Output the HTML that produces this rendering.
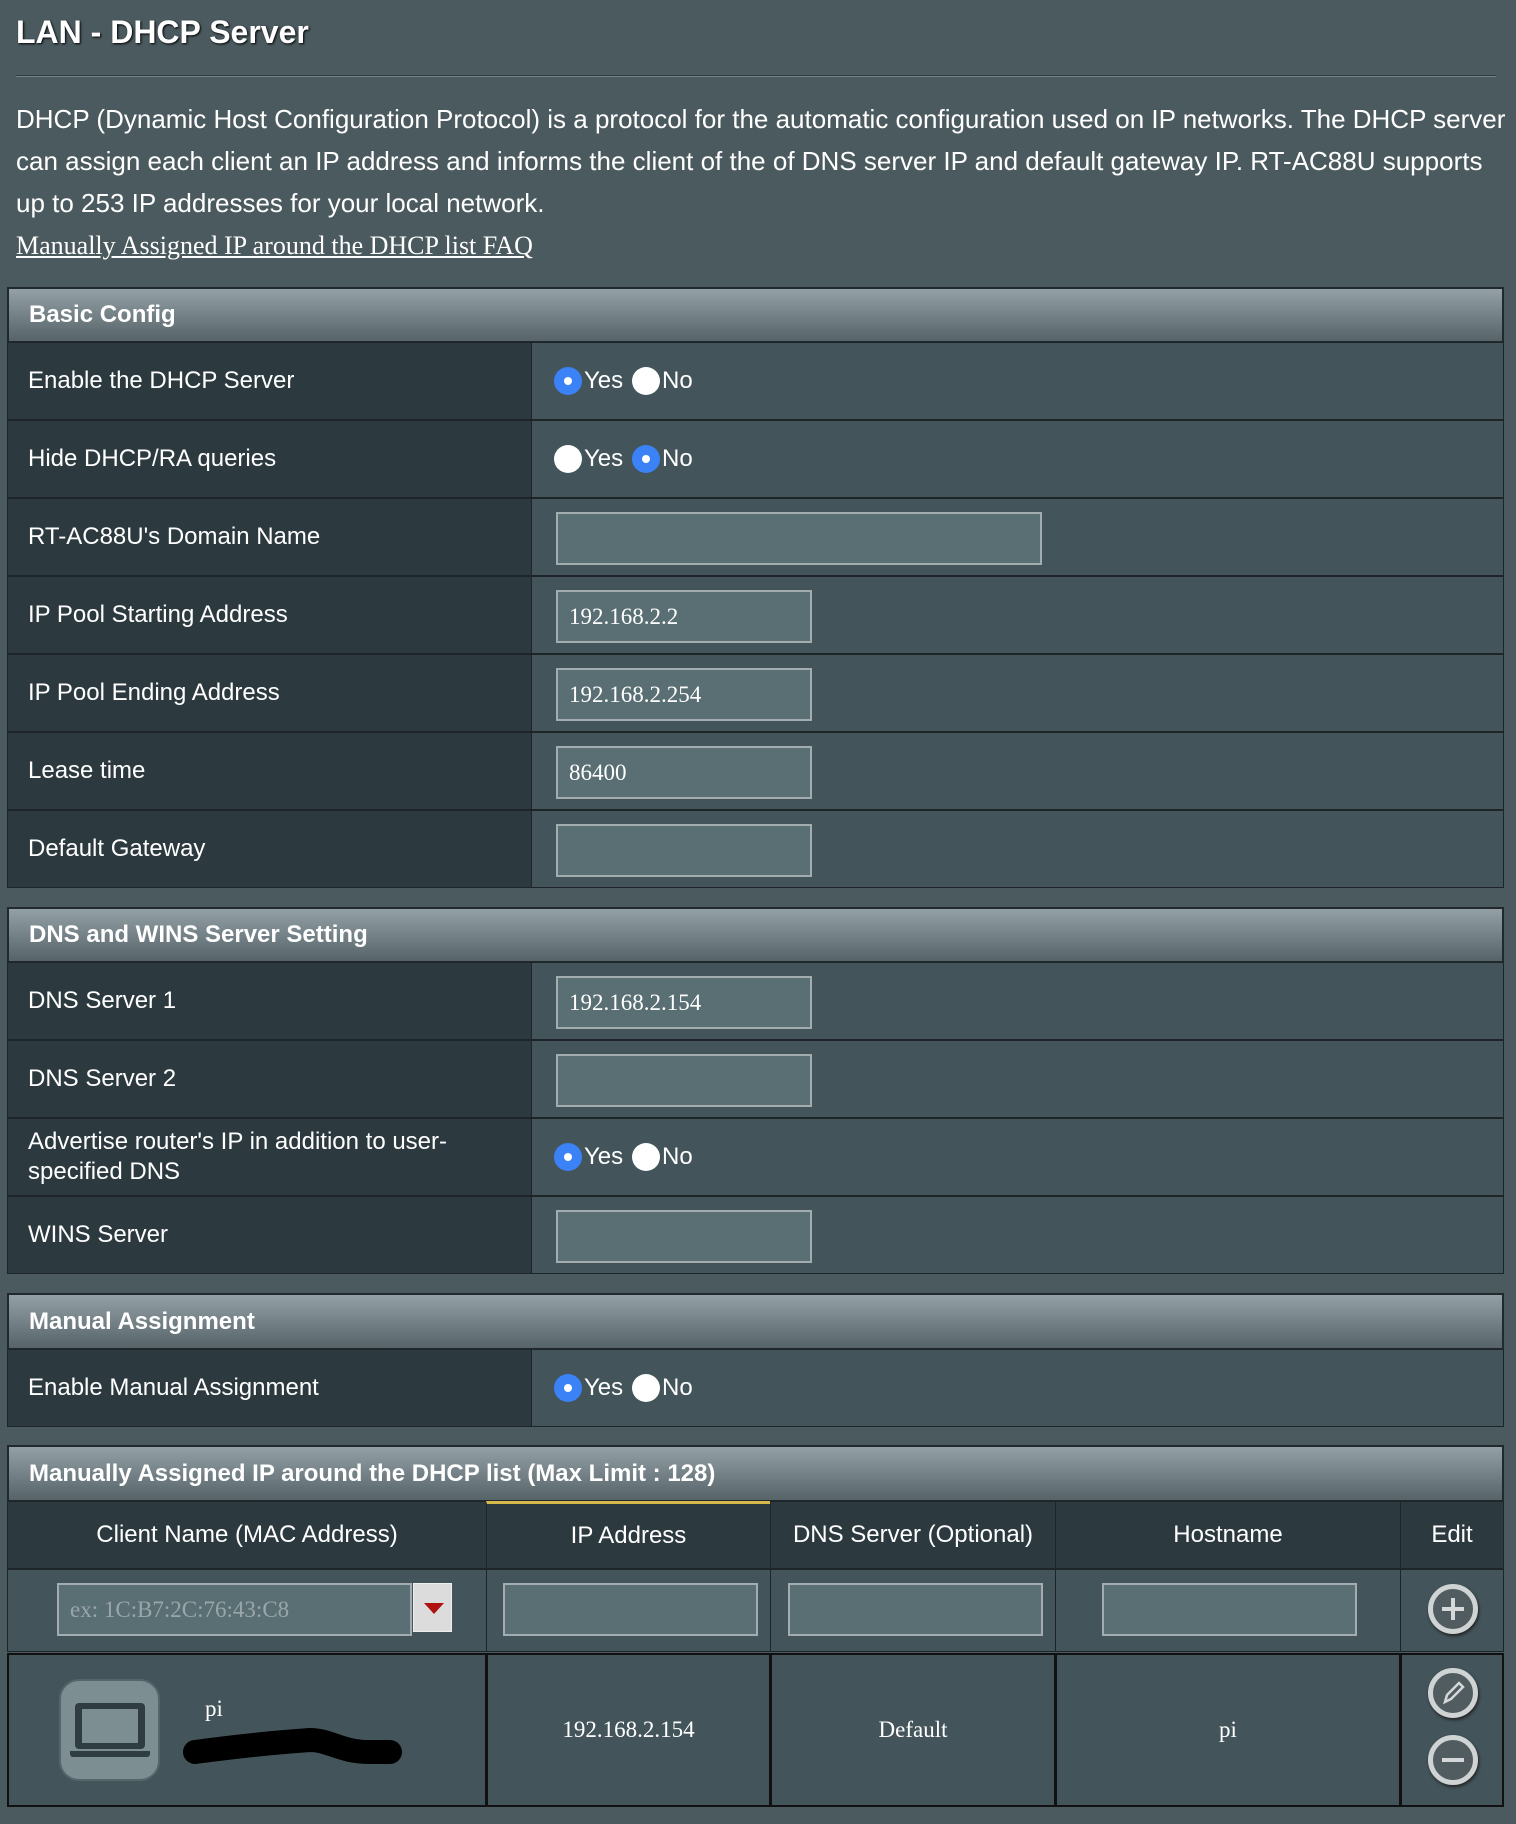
<!DOCTYPE html>
<html><head><meta charset="utf-8"><style>
*{box-sizing:border-box;margin:0;padding:0}
body{width:1516px;height:1824px;background:#4b5a5f;font-family:"Liberation Sans",sans-serif;color:#fff;position:relative;overflow:hidden}
.a{position:absolute}
h1{position:absolute;left:16px;top:14px;font-size:32px;font-weight:bold;text-shadow:1px 1px 2px #000}
.hr{left:16px;top:75px;width:1480px;height:2px;background:#2e3a3f;border-bottom:1px solid #77868b}
.p{left:16px;font-size:26px;line-height:42px;top:98px;width:1500px}
.lnk{left:16px;top:231px;font-family:"Liberation Serif",serif;font-size:26px;text-decoration:underline}
.hd{left:7px;width:1497px;background:linear-gradient(#93a0a5,#566469);border:2px solid #22292c;font-weight:bold;font-size:24px;padding-left:20px;display:flex;align-items:center}
.lb{left:7px;width:525px;height:78px;background:#2c3a40;border:1px solid #1d2528;font-size:24px;padding-left:20px;display:flex;align-items:center;line-height:30px}
.vl{left:531px;width:973px;height:78px;background:#43555b;border:1px solid #1d2528}
.in{position:absolute;background:#5a6f74;border:2px solid #a3adb0;font-family:"Liberation Serif",serif;font-size:23px;color:#fff;padding-left:11px;display:flex;align-items:center}
.r{position:absolute;width:28px;height:28px;border-radius:50%;background:#fff}
.r.on{background:#3b82f6}.r.on:after{content:"";position:absolute;left:10px;top:10px;width:8px;height:8px;border-radius:50%;background:#fff}
.rt{position:absolute;font-size:24px}
.c{position:absolute;border:1px solid #1d2528;display:flex;align-items:center;justify-content:center;font-size:24px}
.ic{position:absolute;width:50px;height:50px;border-radius:50%;border:5px solid #cfd3d4;background:#505c60;box-shadow:1px 2px 3px #222}
</style></head><body>
<h1>LAN - DHCP Server</h1>
<div class="a hr"></div>
<div class="a p">DHCP (Dynamic Host Configuration Protocol) is a protocol for the automatic configuration used on IP networks. The DHCP server can assign each client an IP address and informs the client of the of DNS server IP and default gateway IP. RT-AC88U supports up to 253 IP addresses for your local network.</div>
<div class="a lnk">Manually Assigned IP around the DHCP list FAQ</div>

<div class="a hd" style="top:287px;height:56px">Basic Config</div>
<div class="a lb" style="top:342px">Enable the DHCP Server</div><div class="a vl" style="top:342px"></div>
<div class="a lb" style="top:420px">Hide DHCP/RA queries</div><div class="a vl" style="top:420px"></div>
<div class="a lb" style="top:498px">RT-AC88U's Domain Name</div><div class="a vl" style="top:498px"></div>
<div class="a lb" style="top:576px">IP Pool Starting Address</div><div class="a vl" style="top:576px"></div>
<div class="a lb" style="top:654px">IP Pool Ending Address</div><div class="a vl" style="top:654px"></div>
<div class="a lb" style="top:732px">Lease time</div><div class="a vl" style="top:732px"></div>
<div class="a lb" style="top:810px">Default Gateway</div><div class="a vl" style="top:810px"></div>

<div class="r on" style="left:554px;top:367px"></div><div class="rt" style="left:584px;top:367px">Yes</div>
<div class="r" style="left:632px;top:367px"></div><div class="rt" style="left:662px;top:367px">No</div>
<div class="r" style="left:554px;top:445px"></div><div class="rt" style="left:584px;top:445px">Yes</div>
<div class="r on" style="left:632px;top:445px"></div><div class="rt" style="left:662px;top:445px">No</div>
<div class="in" style="left:556px;top:512px;width:486px;height:53px"></div>
<div class="in" style="left:556px;top:590px;width:256px;height:53px">192.168.2.2</div>
<div class="in" style="left:556px;top:668px;width:256px;height:53px">192.168.2.254</div>
<div class="in" style="left:556px;top:746px;width:256px;height:53px">86400</div>
<div class="in" style="left:556px;top:824px;width:256px;height:53px"></div>

<div class="a hd" style="top:907px;height:56px">DNS and WINS Server Setting</div>
<div class="a lb" style="top:962px">DNS Server 1</div><div class="a vl" style="top:962px"></div>
<div class="a lb" style="top:1040px">DNS Server 2</div><div class="a vl" style="top:1040px"></div>
<div class="a lb" style="top:1118px">Advertise router's IP in addition to user-<br>specified DNS</div><div class="a vl" style="top:1118px"></div>
<div class="a lb" style="top:1196px">WINS Server</div><div class="a vl" style="top:1196px"></div>
<div class="in" style="left:556px;top:976px;width:256px;height:53px">192.168.2.154</div>
<div class="in" style="left:556px;top:1054px;width:256px;height:53px"></div>
<div class="r on" style="left:554px;top:1143px"></div><div class="rt" style="left:584px;top:1143px">Yes</div>
<div class="r" style="left:632px;top:1143px"></div><div class="rt" style="left:662px;top:1143px">No</div>
<div class="in" style="left:556px;top:1210px;width:256px;height:53px"></div>

<div class="a hd" style="top:1293px;height:57px">Manual Assignment</div>
<div class="a lb" style="top:1349px">Enable Manual Assignment</div><div class="a vl" style="top:1349px"></div>
<div class="r on" style="left:554px;top:1374px"></div><div class="rt" style="left:584px;top:1374px">Yes</div>
<div class="r" style="left:632px;top:1374px"></div><div class="rt" style="left:662px;top:1374px">No</div>

<div class="a hd" style="top:1445px;height:57px">Manually Assigned IP around the DHCP list (Max Limit : 128)</div>
<div class="c" style="left:7px;top:1501px;width:480px;height:68px;background:#2c3a40">Client Name (MAC Address)</div>
<div class="c" style="left:486px;top:1501px;width:285px;height:68px;background:#2c3a40;border-top:3px solid #d4b84a">IP Address</div>
<div class="c" style="left:770px;top:1501px;width:286px;height:68px;background:#2c3a40">DNS Server (Optional)</div>
<div class="c" style="left:1055px;top:1501px;width:346px;height:68px;background:#2c3a40">Hostname</div>
<div class="c" style="left:1400px;top:1501px;width:104px;height:68px;background:#2c3a40">Edit</div>

<div class="c" style="left:7px;top:1569px;width:480px;height:83px;background:#43555b"></div>
<div class="c" style="left:486px;top:1569px;width:285px;height:83px;background:#43555b"></div>
<div class="c" style="left:770px;top:1569px;width:286px;height:83px;background:#43555b"></div>
<div class="c" style="left:1055px;top:1569px;width:346px;height:83px;background:#43555b"></div>
<div class="c" style="left:1400px;top:1569px;width:104px;height:83px;background:#43555b"></div>
<div class="in" style="left:57px;top:1583px;width:355px;height:53px;color:#9aa6a9">ex: 1C:B7:2C:76:43:C8</div>
<div class="a" style="left:413px;top:1583px;width:39px;height:49px;background:#dcdcdc;border:1px solid #eee"><div style="position:absolute;left:10px;top:19px;width:0;height:0;border-left:10px solid transparent;border-right:10px solid transparent;border-top:11px solid #b01010"></div></div>
<div class="in" style="left:503px;top:1583px;width:255px;height:53px"></div>
<div class="in" style="left:788px;top:1583px;width:255px;height:53px"></div>
<div class="in" style="left:1102px;top:1583px;width:255px;height:53px"></div>
<div class="ic" style="left:1428px;top:1584px"><div style="position:absolute;left:9px;top:18px;width:22px;height:4px;background:#d4d8d9"></div><div style="position:absolute;left:18px;top:9px;width:4px;height:22px;background:#d4d8d9"></div></div>

<div class="c" style="left:7px;top:1653px;width:480px;height:154px;background:#43555b;border:2px solid #111"></div>
<div class="c" style="left:486px;top:1653px;width:285px;height:154px;background:#43555b;border:2px solid #111;font-family:'Liberation Serif',serif;font-size:23px">192.168.2.154</div>
<div class="c" style="left:770px;top:1653px;width:286px;height:154px;background:#43555b;border:2px solid #111;font-family:'Liberation Serif',serif;font-size:23px">Default</div>
<div class="c" style="left:1055px;top:1653px;width:346px;height:154px;background:#43555b;border:2px solid #111;font-family:'Liberation Serif',serif;font-size:23px">pi</div>
<div class="c" style="left:1400px;top:1653px;width:104px;height:154px;background:#43555b;border:2px solid #111"></div>
<div class="a" style="left:59px;top:1679px;width:101px;height:102px;border-radius:20px;background:#7d8e93;border:2px solid #55666b">
<div style="position:absolute;left:14px;top:22px;width:70px;height:46px;background:#2f3d42;border-radius:4px"></div>
<div style="position:absolute;left:21px;top:28px;width:56px;height:34px;background:#7d8e93"></div>
<div style="position:absolute;left:9px;top:70px;width:80px;height:6px;background:#2f3d42;border-radius:0 0 3px 3px"></div></div>
<div class="a" style="left:205px;top:1696px;font-family:'Liberation Serif',serif;font-size:23px">pi</div>
<svg class="a" style="left:180px;top:1728px" width="230" height="45"><path d="M15 24 C60 18 100 14 130 12 C150 12 160 24 190 24 L210 24" stroke="#000" stroke-width="24" stroke-linecap="round" fill="none"/></svg>
<div class="ic" style="left:1428px;top:1668px"><svg width="40" height="40" style="position:absolute;left:0;top:0"><path d="M12 29 L14 22 L26 10 L30 14 L18 26 Z" stroke="#d4d8d9" stroke-width="2.5" fill="none"/></svg></div>
<div class="ic" style="left:1428px;top:1735px"><div style="position:absolute;left:9px;top:18px;width:22px;height:4px;background:#d4d8d9"></div></div>
</body></html>
